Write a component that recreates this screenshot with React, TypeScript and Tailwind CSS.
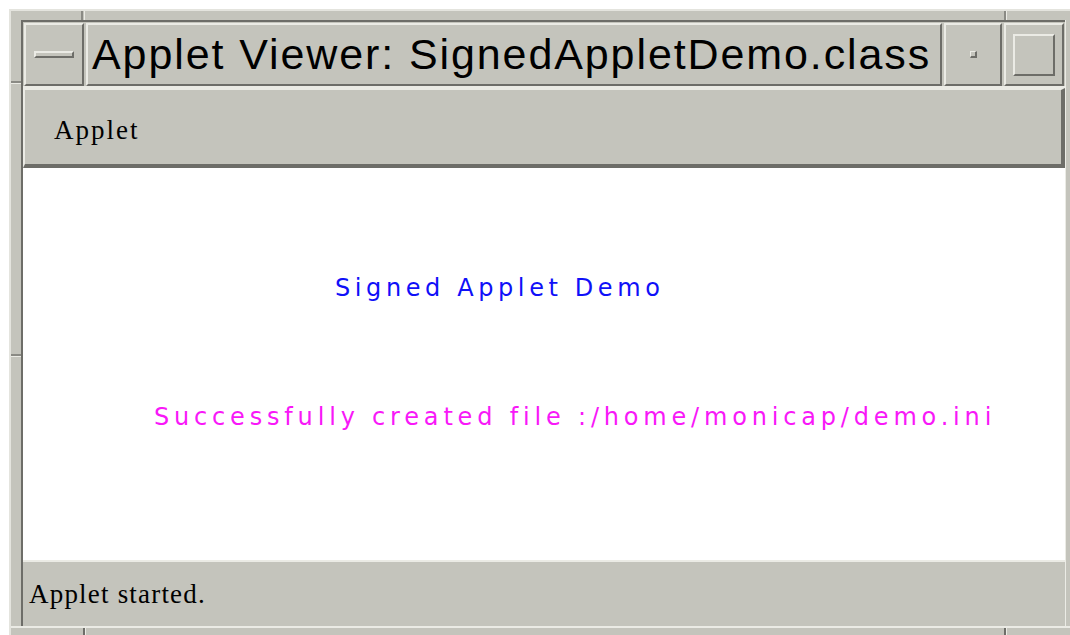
const frame = 'bg-[#c4c4bc]'

// raised bevel: light top/left, dark bottom/right
const raised = 'border-t-2 border-l-2 border-b-2 border-r-2 border-t-[#ebebe5] border-l-[#ebebe5] border-b-[#6d6d68] border-r-[#6d6d68]'

function TitleBar() {
  return (
    <div className="flex h-[64px] gap-[2px] pl-[1px] pr-[1px] pt-[1px]">
      {/* window menu button */}
      <div className={`w-[60px] ${raised} ${frame} flex items-center justify-center`}>
        <div className="w-[40px] h-[7px] border-t-2 border-l-2 border-b-2 border-r-2 border-t-[#ebebe5] border-l-[#ebebe5] border-b-[#6d6d68] border-r-[#6d6d68]" />
      </div>
      <div className={`flex-1 ${raised} ${frame} flex items-center pl-[4px] overflow-hidden`}>
        <span className="text-[43px] leading-none text-black whitespace-nowrap tracking-[1.9px]" style={{ fontFamily: '"Liberation Sans", Arial, sans-serif' }}>
          Applet Viewer: SignedAppletDemo.class
        </span>
      </div>
      {/* minimize */}
      <div className={`w-[58px] ${raised} ${frame} flex items-center justify-center`}>
        <div className="w-[7px] h-[7px] border-t border-l border-b-2 border-r-2 border-t-[#ebebe5] border-l-[#ebebe5] border-b-[#6d6d68] border-r-[#6d6d68]" />
      </div>
      {/* maximize */}
      <div className={`w-[60px] ${raised} ${frame} flex items-center justify-center`}>
        <div className="w-[42px] h-[42px] border-t-2 border-l-2 border-b-2 border-r-2 border-t-[#ebebe5] border-l-[#ebebe5] border-b-[#6d6d68] border-r-[#6d6d68]" />
      </div>
    </div>
  )
}

export default function App() {
  return (
    <div className="w-[1070px] h-[635px] bg-white pl-[9px] pt-[9px] overflow-hidden">
      <div className={`w-[1061px] h-[626px] ${frame} border-t-2 border-l-2 border-[#e4e4de] flex flex-col`}>
        {/* top frame edge with resize ticks */}
        <div className="h-[9px] flex">
          <div className="w-[72px] border-r-2 border-r-[#8a8a84]" />
          <div className="flex-1 border-r-2 border-r-[#8a8a84] ml-[1px] border-l border-l-[#ebebe5]" />
          <div className="w-[64px] border-l border-l-[#ebebe5]" />
        </div>
        <div className="flex flex-1 min-h-0">
          {/* left frame edge */}
          <div className="w-[10px] flex flex-col">
            <div className="h-[63px] border-b-2 border-b-[#8a8a84]" />
            <div className="flex-1 border-t border-t-[#ebebe5] border-b-2 border-b-[#8a8a84]" />
            <div className="flex-1 border-t border-t-[#ebebe5]" />
          </div>
          <div className="flex-1 flex flex-col border-t-2 border-l-2 border-[#6d6d68] bg-[#c4c4bc]">
            <TitleBar />
            <div className="h-[2px] bg-[#ebebe5]" />
            {/* menu bar */}
            <div className="h-[80px] flex items-center pl-[29px] pt-[6px] border-t-2 border-l-2 border-b-[4px] border-r-[4px] border-t-[#ebebe5] border-l-[#ebebe5] border-b-[#6d6d68] border-r-[#6d6d68] bg-[#c4c4bc]">
              <span className="text-[27px] text-black tracking-[2px]" style={{ fontFamily: '"Liberation Serif", "Times New Roman", serif' }}>Applet</span>
            </div>
            {/* applet canvas */}
            <div className="flex-1 bg-white flex flex-col" style={{ fontFamily: '"DejaVu Sans", Verdana, sans-serif' }}>
              <div className="pl-[312px] pt-[106px] text-[24px] leading-[28px] text-[#1010f8] tracking-[4.6px] whitespace-nowrap">Signed Applet Demo</div>
              <div className="pl-[131px] pt-[101px] text-[24px] leading-[28px] text-[#f818f8] tracking-[4.82px] whitespace-nowrap">Successfully created file :/home/monicap/demo.ini</div>
            </div>
            {/* status bar */}
            <div className="h-[66px] border-t-2 border-t-[#ebebe5] flex items-center pl-[6px] bg-[#c4c4bc]">
              <span className="text-[27px] text-black tracking-[1.2px]" style={{ fontFamily: '"Liberation Serif", "Times New Roman", serif' }}>Applet started.</span>
            </div>
          </div>
          {/* right frame edge */}
          <div className="w-[5px] border-l border-l-[#ebebe5]" />
        </div>
        {/* bottom frame edge */}
        <div className="h-[9px] flex border-t-2 border-t-[#ebebe5]">
          <div className="w-[74px] border-r-2 border-r-[#6d6d68]" />
          <div className="flex-1 border-r-2 border-r-[#6d6d68] border-l border-l-[#ebebe5]" />
          <div className="w-[64px] border-l border-l-[#ebebe5]" />
        </div>
      </div>
    </div>
  )
}
